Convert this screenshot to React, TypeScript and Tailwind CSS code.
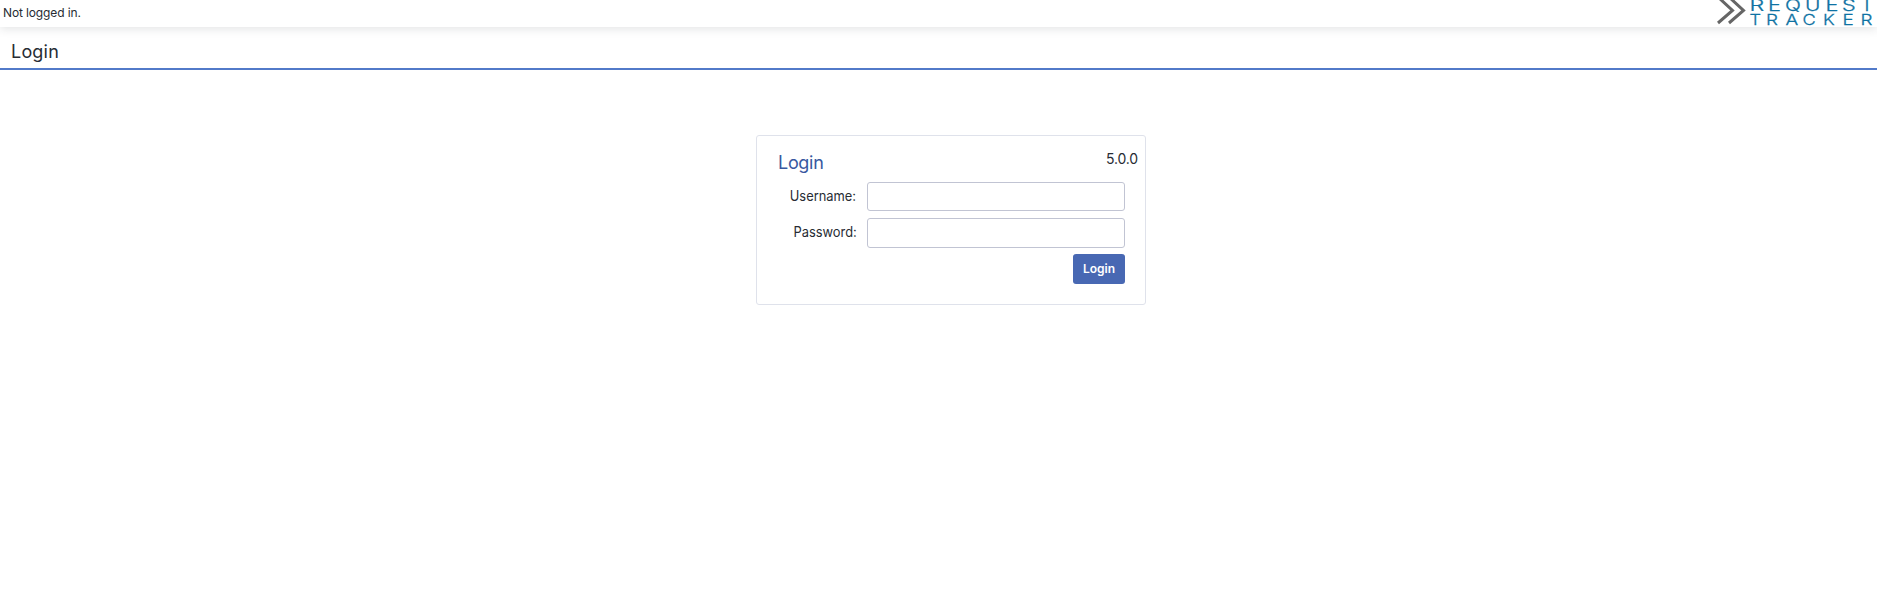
type Glyph = [char: string, x: number, scale: number];

const TOP: Glyph[] = [["R", 1749.5, 1.5], ["E", 1768, 1.4], ["Q", 1785, 1.35], ["U", 1805, 1.35], ["E", 1825.5, 1.4], ["S", 1842, 1.4], ["T", 1860.5, 1.3]];
const BOTTOM: Glyph[] = [["T", 1749.5, 1.25], ["R", 1766, 1.3], ["A", 1785.5, 1.3], ["C", 1802.5, 1.25], ["K", 1823, 1.25], ["E", 1842.5, 1.3], ["R", 1860.5, 1.3]];

function Word({ glyphs, y, size }: { glyphs: Glyph[]; y: number; size: number }) {
  return (
    <g fill="#0e72a3" stroke="#0e72a3" strokeWidth="0.25" fontFamily="Inter, sans-serif" fontWeight="300" fontSize={size}>
      {glyphs.map(([char, x, scale], i) => (
        <text key={i} transform={`translate(${x - 1717} ${y}) scale(${scale} 1)`}>{char}</text>
      ))}
    </g>
  );
}

function Logo() {
  return (
    <svg className="block h-[27px] w-[160px]" viewBox="0 0 160 27" role="img" aria-label="Request Tracker">
      <g fill="none" stroke="#666666" strokeWidth="3">
        <path d="M1 -3 L15.5 10.5 L1 23" />
        <path d="M12 -3 L26.5 10.5 L12 23" />
      </g>
      <Word glyphs={TOP} y={10.5} size={15.5} />
      <Word glyphs={BOTTOM} y={24.6} size={14.5} />
    </svg>
  );
}

function Field({ label, type, className }: { label: string; type: string; className: string }) {
  return (
    <label className="flex items-center justify-end">
      <span className="mr-[10.5px] -mt-[2px] origin-right scale-x-[0.92] text-[14px] leading-5">{label}</span>
      <input type={type} className={`w-[258px] rounded-[3px] border border-[#c1c4d3] bg-white px-2 outline-none ${className}`} />
    </label>
  );
}

export default function App() {
  return (
    <div className="min-h-[612px] bg-white font-['Inter',sans-serif] text-[#272c33]">
      <header className="flex h-[27px] justify-between overflow-hidden bg-white pl-[3px] shadow-[0_2px_10px_rgba(39,44,51,0.13)]">
        <span className="pt-[5px] text-[12px] leading-4 tracking-[-0.13px]">Not logged in.</span>
        <Logo />
      </header>
      <div className="h-[43px] border-b-2 border-[#527ac9] pt-[13px] pl-[11px]">
        <h1 className="text-[18px] leading-6 tracking-[0.2px]">Login</h1>
      </div>
      <main className="pt-[65px] pl-[756px]">
        <form className="h-[170px] w-[390px] rounded-[3px] border border-[#dfe2eb] pr-[20px]">
          <div className="-mr-[13px] flex h-[46px] justify-between pl-[21px]">
            <h2 className="pt-[15px] text-[18px] leading-6 tracking-[-0.3px] text-[#3858a0]">Login</h2>
            <span className="pt-[13px] text-[14px] leading-5 tracking-[-0.15px]">5.0.0</span>
          </div>
          <div className="flex flex-col gap-[7px]">
            <Field label="Username:" type="text" className="h-[29px]" />
            <Field label="Password:" type="password" className="h-[30px]" />
          </div>
          <div className="flex justify-end pt-[6px]">
            <button type="button" className="h-[30px] w-[52px] rounded-[3px] bg-[#4868b3] pb-px text-[12px] font-semibold text-white">Login</button>
          </div>
        </form>
      </main>
    </div>
  );
}
